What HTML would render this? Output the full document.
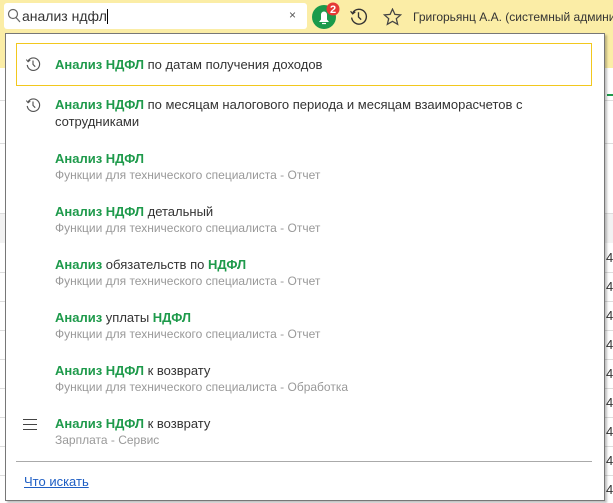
<!DOCTYPE html>
<html><head><meta charset="utf-8"><style>
*{margin:0;padding:0;box-sizing:border-box}
html,body{width:613px;height:503px;overflow:hidden}
body{position:relative;background:#fff;font-family:"Liberation Sans",Arial,sans-serif;font-size:13px;color:#333}
.hdr{position:absolute;left:0;top:0;width:613px;height:33px;background:#fbeda6}
.bar2{position:absolute;left:0;top:33px;width:613px;height:35px;background:#fbeda6}
.line{position:absolute;left:0;width:613px;height:1px;background:#ddd}
.search{position:absolute;left:4px;top:3px;width:303px;height:26px;background:#fff;border-radius:3px}
.pop{position:absolute;left:5px;top:33px;width:600px;height:468px;background:#fff;border:1px solid #777;box-shadow:2px 2px 2px rgba(0,0,0,.25)}
.it{position:absolute;left:49px;font-size:13px;color:#333;white-space:nowrap}
.g{color:#1e9a4b;font-weight:bold}
.s{position:absolute;left:49px;font-size:12px;color:#999;white-space:nowrap}
.sel{position:absolute;left:10px;top:9px;width:576px;height:43px;border:1px solid #f2c81e}
.num{position:absolute;left:606px;font-size:13px;color:#333}
</style></head><body>
<div class="hdr"></div>
<div class="bar2"></div>
<div class="line" style="top:100px"></div>
<div class="line" style="top:143px"></div>
<div style="position:absolute;left:0;top:213px;width:613px;height:30px;background:#f2f2f2;border-top:1px solid #ddd"></div>
<div class="line" style="top:272px"></div><div class="line" style="top:301px"></div><div class="line" style="top:330px"></div><div class="line" style="top:359px"></div><div class="line" style="top:388px"></div><div class="line" style="top:417px"></div><div class="line" style="top:446px"></div><div class="line" style="top:475px"></div>
<div class="num" style="top:250px">4</div><div class="num" style="top:279px">4</div><div class="num" style="top:308px">4</div><div class="num" style="top:337px">4</div><div class="num" style="top:366px">4</div><div class="num" style="top:395px">4</div><div class="num" style="top:424px">4</div><div class="num" style="top:453px">4</div><div class="num" style="top:482px">4</div>
<div style="position:absolute;left:607px;top:94px;width:6px;height:2px;background:#1e9a4b"></div>
<div class="search">
<svg style="position:absolute;left:3px;top:5px" width="14" height="15" viewBox="0 0 14 15"><circle cx="6" cy="6" r="4.5" fill="none" stroke="#666" stroke-width="1.2"/><path d="M9 9.5l4 4.5" stroke="#666" stroke-width="1.3"/></svg>
<span style="position:absolute;left:18px;top:5px;font-size:14px;color:#333">анализ ндфл<span style="display:inline-block;width:1px;height:15px;background:#000;vertical-align:-3px"></span></span>
<span style="position:absolute;left:285px;top:5px;font-size:12px;color:#555">×</span>
</div>
<svg style="position:absolute;left:310px;top:1px" width="34" height="30" viewBox="0 0 34 30"><circle cx="14" cy="16" r="12" fill="#1a9a4b"/><path d="M9 21h10l-2-2.5v-5a3 3 0 0 0-6 0v5z" fill="#fff"/><path d="M12 22.5h4" stroke="#fff" stroke-width="1.2"/><circle cx="23" cy="8" r="6.5" fill="#e53935"/><text x="23" y="12" font-size="11" font-weight="bold" fill="#fff" text-anchor="middle" font-family="Liberation Sans">2</text></svg>
<svg style="position:absolute;left:349px;top:7px" width="19" height="19" viewBox="0 0 18 18"><path d="M3.5 5.5A7 7 0 1 1 2.5 10" fill="none" stroke="#333" stroke-width="1.3"/><path d="M1.5 4l2 2.5 2.5-2" fill="none" stroke="#333" stroke-width="1.2"/><path d="M9 5v4.5l2.5 2.5" fill="none" stroke="#333" stroke-width="1.3"/></svg>
<svg style="position:absolute;left:383px;top:8px" width="19" height="18" viewBox="0 0 18 17"><path d="M9 1l2.3 5 5.4.5-4.1 3.6 1.3 5.3L9 12.6 4.1 15.4l1.3-5.3L1.3 6.5l5.4-.5z" fill="none" stroke="#444" stroke-width="1.2"/></svg>
<div style="position:absolute;left:413px;top:10px;width:200px;overflow:hidden;font-size:12px;color:#333;white-space:nowrap">Григорьянц А.А. (системный администратор)</div>
<div class="pop">
<div class="sel"></div>
<svg style="position:absolute;left:19px;top:22px" width="16" height="16" viewBox="0 0 18 18"><path d="M3.5 5.5A7 7 0 1 1 2.5 10" fill="none" stroke="#555" stroke-width="1.3"/><path d="M1.5 4l2 2.5 2.5-2" fill="none" stroke="#555" stroke-width="1.2"/><path d="M9 5v4.5l2.5 2.5" fill="none" stroke="#555" stroke-width="1.3"/></svg>
<div class="it" style="top:23px"><span class="g">Анализ НДФЛ</span> по датам получения доходов</div>
<svg style="position:absolute;left:19px;top:63px" width="16" height="16" viewBox="0 0 18 18"><path d="M3.5 5.5A7 7 0 1 1 2.5 10" fill="none" stroke="#555" stroke-width="1.3"/><path d="M1.5 4l2 2.5 2.5-2" fill="none" stroke="#555" stroke-width="1.2"/><path d="M9 5v4.5l2.5 2.5" fill="none" stroke="#555" stroke-width="1.3"/></svg>
<div class="it" style="top:63px"><span class="g">Анализ НДФЛ</span> по месяцам налогового периода и месяцам взаиморасчетов с</div>
<div class="it" style="top:80px">сотрудниками</div>
<div class="it" style="top:117px"><span class="g">Анализ НДФЛ</span></div>
<div class="s" style="top:134px">Функции для технического специалиста - Отчет</div>
<div class="it" style="top:170px"><span class="g">Анализ НДФЛ</span> детальный</div>
<div class="s" style="top:187px">Функции для технического специалиста - Отчет</div>
<div class="it" style="top:223px"><span class="g">Анализ</span> обязательств по <span class="g">НДФЛ</span></div>
<div class="s" style="top:240px">Функции для технического специалиста - Отчет</div>
<div class="it" style="top:276px"><span class="g">Анализ</span> уплаты <span class="g">НДФЛ</span></div>
<div class="s" style="top:293px">Функции для технического специалиста - Отчет</div>
<div class="it" style="top:329px"><span class="g">Анализ НДФЛ</span> к возврату</div>
<div class="s" style="top:346px">Функции для технического специалиста - Обработка</div>
<div style="position:absolute;left:17px;top:385px;width:14px;height:1px;background:#444"></div>
<div style="position:absolute;left:17px;top:390px;width:14px;height:1px;background:#444"></div>
<div style="position:absolute;left:17px;top:395px;width:14px;height:1px;background:#444"></div>
<div class="it" style="top:382px"><span class="g">Анализ НДФЛ</span> к возврату</div>
<div class="s" style="top:399px">Зарплата - Сервис</div>
<div style="position:absolute;left:10px;top:427px;width:576px;height:1px;background:#aaa"></div>
<div style="position:absolute;left:18px;top:440px;font-size:13px;color:#1f5fc4;text-decoration:underline">Что искать</div>
</div>
</body></html>
